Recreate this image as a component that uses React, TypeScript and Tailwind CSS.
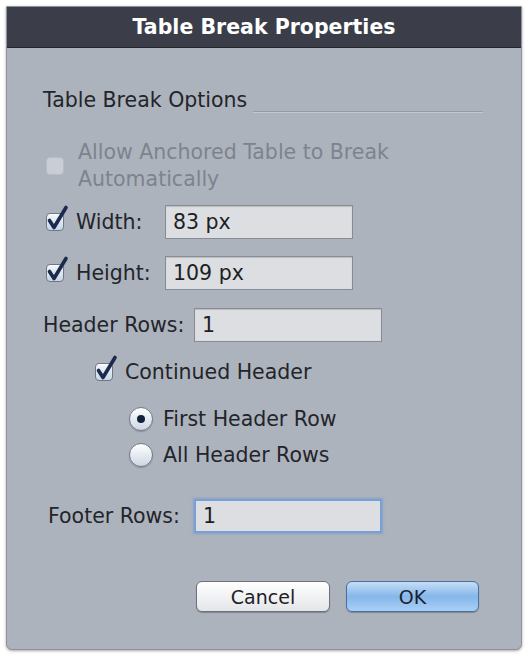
import React from 'react';

const font = { fontFamily: '"DejaVu Sans", "Liberation Sans", sans-serif' };

const Check = ({ checked = true, disabled = false }: { checked?: boolean; disabled?: boolean }) => (
  <span className="relative inline-block w-[18px] h-[18px] shrink-0">
    <span
      className={
        disabled
          ? 'absolute inset-0 rounded-[4px] border border-[#b8bcc5] bg-[#c9cdd6]'
          : 'absolute inset-0 rounded-[4px] border border-[#6f7686] bg-gradient-to-b from-[#f4f7fb] to-[#c8d6e8] shadow-[inset_0_1px_1px_rgba(255,255,255,0.8)]'
      }
    />
    {checked && (
      <svg className="absolute left-0 top-[-8px] overflow-visible" width="24" height="28" viewBox="0 0 24 28">
        <path
          d="M3.5 15.5 L8 22.5 L20 2.5"
          fill="none"
          stroke="#1c2a4d"
          strokeWidth="3.6"
          strokeLinecap="round"
          strokeLinejoin="round"
        />
      </svg>
    )}
  </span>
);

const Radio = ({ on }: { on: boolean }) => (
  <span className="relative inline-flex items-center justify-center w-[24px] h-[24px] rounded-full border border-[#737a89] bg-gradient-to-b from-[#ffffff] to-[#cdd7e4] shadow-[0_1px_1px_rgba(0,0,0,0.2)] shrink-0">
    {on && <span className="w-[8px] h-[8px] rounded-full bg-[#14213b]" />}
  </span>
);

const Field = ({ value, width, focus = false }: { value: string; width: string; focus?: boolean }) => (
  <div
    className={
      'h-[34px] flex items-center pl-[7px] text-[20.5px] text-[#1d1f24] bg-[#dcdee2] ' +
      width +
      (focus
        ? ' border-2 border-[#7a9fd2] shadow-[0_0_2px_1px_rgba(110,150,210,0.6)]'
        : ' border border-[#878b93] shadow-[inset_0_1px_1px_rgba(0,0,0,0.15)]')
    }
  >
    {value}
  </div>
);

export default function App() {
  return (
    <div className="w-[529px] h-[656px] bg-white pt-[6px] pl-[6px] pr-[7px] pb-[6px]" style={font}>
      <div className="h-full flex flex-col bg-[#adb3bd] border border-[#8d929b] rounded-b-[6px] overflow-hidden shadow-[0_1px_3px_rgba(0,0,0,0.35)]">
        <div className="h-[41px] shrink-0 bg-[#3b3e48] border-b border-[#24262c] flex items-center justify-center text-white text-[20.5px] font-bold">
          Table Break Properties
        </div>

        <div className="flex flex-col pl-[36px] pr-[38px] text-[#23252a] text-[20.5px] leading-[28px]">
          <div className="mt-[39px] flex items-end gap-[6px]">
            <span className="leading-[26px]">Table Break Options</span>
            <span className="flex-1 h-[2px] border-t border-[#959ba5] border-b border-b-[#c3c8d0]" />
          </div>

          <div className="mt-[26px] flex items-center gap-[14px] pl-[3px]">
            <Check checked={false} disabled />
            <span className="text-[#7d838d] leading-[27px]">
              Allow Anchored Table to Break
              <br />
              Automatically
            </span>
          </div>

          <div className="mt-[12px] flex items-center pl-[3px]">
            <Check />
            <span className="ml-[12px] w-[89px]">Width:</span>
            <Field value="83 px" width="w-[188px]" />
          </div>

          <div className="mt-[17px] flex items-center pl-[3px]">
            <Check />
            <span className="ml-[12px] w-[89px]">Height:</span>
            <Field value="109 px" width="w-[188px]" />
          </div>

          <div className="mt-[18px] flex items-center">
            <span className="w-[151px]">Header Rows:</span>
            <Field value="1" width="w-[188px]" />
          </div>

          <div className="mt-[16px] flex items-center pl-[52px]">
            <Check />
            <span className="ml-[12px]">Continued Header</span>
          </div>

          <div className="mt-[19px] flex items-center pl-[86px]">
            <Radio on />
            <span className="ml-[10px]">First Header Row</span>
          </div>

          <div className="mt-[8px] flex items-center pl-[86px]">
            <Radio on={false} />
            <span className="ml-[10px]">All Header Rows</span>
          </div>

          <div className="mt-[30px] flex items-center pl-[5px]">
            <span className="w-[146px]">Footer Rows:</span>
            <Field value="1" width="w-[188px]" focus />
          </div>

          <div className="mt-[48px] flex justify-end gap-[16px] pr-[4px]">
            <button className="w-[134px] h-[31px] rounded-[6px] border border-[#6e7178] bg-gradient-to-b from-[#ffffff] to-[#e4e6ea] text-[19px] leading-[28px] text-[#1f2126] shadow-[0_1px_1px_rgba(0,0,0,0.25)]">
              Cancel
            </button>
            <button className="w-[133px] h-[31px] rounded-[6px] border border-[#4b6f9f] bg-gradient-to-b from-[#c4ddf5] via-[#86b7ea] to-[#a9d0f5] text-[19px] leading-[28px] text-[#1a2233] shadow-[0_1px_1px_rgba(0,0,0,0.25)]">
              OK
            </button>
          </div>
        </div>
      </div>
    </div>
  );
}
